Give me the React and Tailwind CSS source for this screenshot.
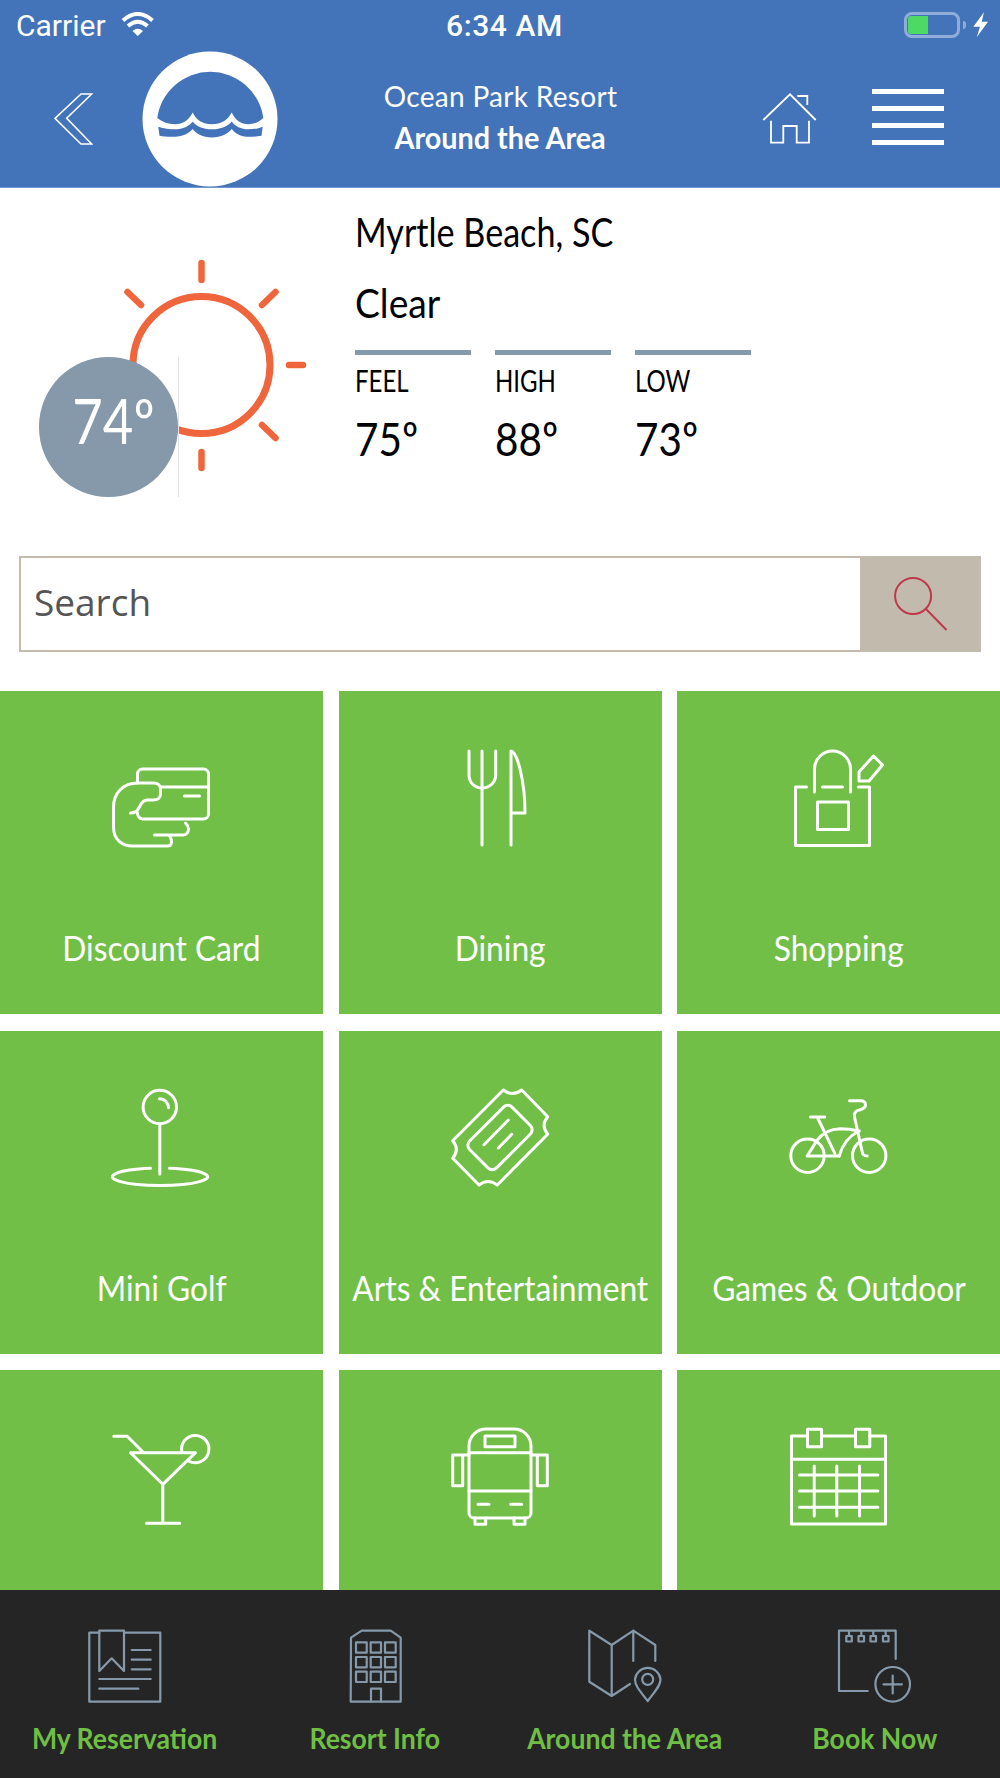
import React from "react";

const W = { fill: "none", stroke: "#fff", strokeWidth: 3, strokeLinecap: "round", strokeLinejoin: "round" };
const G = { fill: "none", stroke: "#8599aa", strokeWidth: 2.2, strokeLinecap: "round", strokeLinejoin: "round" };

const tiles = [
  {
    label: "Discount Card",
    x: 101.5,
    y: 741,
    icon: (
      <>
        <path d="M137 783v-9a5 5 0 0 1 5-5h61a5 5 0 0 1 5 5v40a5 5 0 0 1-5 5h-61a5.500 5.500 0 0 1-5-6" />
        <path d="M160 787h48M184 796h15" />
        <path d="M130 813c4 0 7-2 9-6 2-5 4-7 8-7h6c4 0 7-2 7-6v-5c0-4-3-6-7-6h-16c-14 0-24 10-24 24v20c0 13 9 19 19 19h35c3 0 4-2 4-4 0-4-2-7-4-7h-13h29c3 0 5-3 5-6s-2-5-3-6" />
      </>
    ),
  },
  {
    label: "Dining",
    x: 440,
    y: 741,
    icon: (
      <>
        <path d="M469 751v24c0 8 6 13 13 13s13.700-5 13.700-13v-24M482 751v94" />
        <path d="M511 845v-94c6 0 14 30 14 62h-14" />
      </>
    ),
  },
  {
    label: "Shopping",
    x: 778.5,
    y: 741,
    icon: (
      <>
        <path d="M806 787h-11v58.500h74V787h-11M822 787h20" />
        <path d="M814 792v-23a18 18 0 0 1 36 0v23" />
        <path d="M817 802h31v27.500h-31z" />
        <path d="M873 756l9 9-13.500 16h-10v-9z" />
      </>
    ),
  },
  {
    label: "Mini Golf",
    x: 101.5,
    y: 1081,
    icon: (
      <>
        <circle cx="159.300" cy="1107" r="16.700" />
        <path d="M159.300 1124v50M159 1098.700c5 0 8.500 4 9 9" />
        <path d="M150 1168.300A47.700 8.700 0 1 0 169 1168.300" />
      </>
    ),
  },
  {
    label: "Arts & Entertainment",
    x: 440,
    y: 1081,
    icon: (
      <>
        <path d="M503.300 1090Q512.500 1097 521.700 1090L547.700 1116.700Q540.500 1125.500 547.700 1134.300L497.300 1185Q488 1178 479 1185L452.700 1158.300Q460 1149.500 452.700 1140.700Z" />
        <rect x="470" y="1118.500" width="60" height="38" rx="6" transform="rotate(-45 500 1137.500)" />
        <path d="M508.300 1120L484 1144.700M511.700 1134.300L498.300 1148" />
      </>
    ),
  },
  {
    label: "Games & Outdoor",
    x: 778.5,
    y: 1081,
    icon: (
      <>
        <circle cx="807" cy="1155.700" r="16.700" />
        <circle cx="868.700" cy="1155.700" r="16.700" />
        <path d="M810 1117h14.300M816.700 1117l17.600 36.300" />
        <path d="M838.700 1156h-32l10-16c6-8 14-11 23-11.300 7 0 13 1 19 2.300" />
        <path d="M838.700 1156c3-11 10-20 19.600-25" />
        <path d="M866.700 1156c-3 0-5-2-5-4.300L854 1117c-1-4 2-7 5-7 3-1 6-3 6-5 0-3-2-4.300-5-4.300h-11" />
      </>
    ),
  },
  {
    x: 101.500,
    y: 1420,
    icon: (
      <>
        <path d="M130 1452.700h65l-32.700 31.600zM162.300 1484.300v39M146 1523.300h33.300" />
        <path d="M113.300 1436.300h13.400l16 16" />
        <path d="M181.500 1452.500A13.700 13.700 0 1 1 188 1461" />
      </>
    ),
  },
  {
    x: 440,
    y: 1420,
    icon: (
      <>
        <path d="M469 1446a17 17 0 0 1 17-17h28a17 17 0 0 1 17 17v67a5 5 0 0 1-5 5h-52a5 5 0 0 1-5-5z" />
        <path d="M469 1452.700h62M469 1491h62M485 1436h30v10.700h-30zM478 1504.300h11M510.700 1504.300h11" />
        <path d="M469 1455h-16.300v30.700h10V1455M531 1455h16.300v30.700h-10V1455" />
        <path d="M475 1518v6.300h10.700V1518M514 1518v6.300h11V1518" />
      </>
    ),
  },
  {
    x: 778.500,
    y: 1420,
    icon: (
      <>
        <path d="M807 1436h-16v88h94v-88h-16M821 1436h34M791 1459.300h94" />
        <path d="M807 1429.300h14v17.400h-14zM855 1429.300h14.300v17.400H855z" />
        <path d="M799 1475h78.300M799 1491h78.300M799 1507.300h78.300M813.700 1466v50M836.300 1466v50M859 1466v50" />
      </>
    ),
  },
];

const nav = [
  {
    label: "My Reservation",
    x: 75,
    icon: (
      <>
        <path d="M99.300 1632.700h-10v69h71v-69H124" />
        <path d="M99.300 1630.700H124V1671l-12.300-12.700L99.300 1671z" />
        <path d="M131.700 1650h19M131.700 1659.700h19M131.700 1669.300h19M99.300 1679h51.400M99.300 1688.700h39" />
      </>
    ),
  },
  {
    label: "Resort Info",
    x: 325,
    icon: (
      <>
        <path d="M351 1637.700l10.700-7h29l10 7v64h-50z" />
        <path d="M356 1642.300h10.700v10.400H356zM370.700 1642.300H381v10.400h-10.300zM385 1642.300h10.700v10.400H385zM356 1657h10.700v10.300H356zM370.700 1657H381v10.300h-10.300zM385 1657h10.700v10.300H385zM356 1671.700h10.700v10.300H356zM370.700 1671.700H381v10.300h-10.300zM385 1671.700h10.700v10.300H385z" />
        <path d="M371 1701.700v-13h10v13" />
      </>
    ),
  },
  {
    label: "Around the Area",
    x: 575,
    icon: (
      <>
        <path d="M633.300 1661v-30.300l22 14.300v16M633.300 1630.700L611.700 1645l-22.400-14.300v51l22.400 14.300 18.300-12M611.700 1645v51" />
        <path d="M647.700 1701C640 1691 635 1686 635 1679.500A12.800 12.800 0 0 1 660.500 1679.500C660.500 1686 655 1691 647.700 1701Z" />
        <circle cx="647.700" cy="1679.300" r="5.500" />
      </>
    ),
  },
  {
    label: "Book Now",
    x: 825,
    icon: (
      <>
        <path d="M895.700 1659v-28.300H839V1691h28.700" />
        <path d="M846.300 1636h5.500v5.500h-5.500zM858.500 1636h5.500v5.500h-5.500zM870.500 1636h5.500v5.500h-5.500zM883 1636h5.500v5.500H883zM849 1631v5M861.300 1631v5M873.300 1631v5M885.700 1631v5" />
        <circle cx="892.700" cy="1684.300" r="17.300" />
        <path d="M883.500 1684.300h18.400M892.700 1675.500v18" />
      </>
    ),
  },
];

function Stat({ label, value }) {
  return (
    <div className="flex flex-col w-[116px]">
      <div className="h-[5px] bg-[#8599aa]" />
      <div className="mt-[7px] h-[36px] leading-[36px] text-[30px] text-black whitespace-nowrap origin-left scale-x-[0.8]">{label}</div>
      <div className="mt-[12px] h-[56px] leading-[56px] text-[47px] text-black whitespace-nowrap origin-left scale-x-[0.86]">{value}</div>
    </div>
  );
}

function Tile({ t }) {
  return (
    <div className="flex flex-col items-center h-[323px] bg-[#71bf46]">
      <svg className="mt-[50px] shrink-0" width="120" height="120" viewBox={`${t.x} ${t.y} 120 120`} {...W}>
        {t.icon}
      </svg>
      {t.label && (
        <div className="mt-[66px] h-[40px] leading-[40px] text-[35px] text-white whitespace-nowrap scale-x-[0.906]">{t.label}</div>
      )}
    </div>
  );
}

export default function App() {
  return (
    <div className="w-[1000px] h-[1778px] flex flex-col overflow-hidden bg-white font-[Lato,sans-serif]">
      <header className="h-[188px] shrink-0 bg-[#4374b9] text-white border-b border-[#6f97d0]">
        <div className="h-[50px] grid grid-cols-3 items-center pl-[16px] pr-[12px] font-[Roboto,sans-serif] text-[30px]">
          <div className="flex items-center gap-[14px]">
            <span>Carrier</span>
            <svg width="36" height="26" viewBox="120 12 36 26" fill="none" stroke="#fff" strokeWidth="4">
              <path d="M123 20.500Q137.700 7.500 152.500 20.500M128 26Q137.700 17.500 147.500 26" />
              <path d="M132.500 31L137.700 36L143 31Q137.700 26.500 132.500 31Z" fill="#fff" stroke="none" />
            </svg>
          </div>
          <div className="text-center font-medium tracking-[0.6px] whitespace-nowrap pl-[5px]">6:34 AM</div>
          <div className="flex items-center justify-end">
            <div className="w-[56px] h-[26px] rounded-[8px] border-[3px] border-[#8fadd8] p-[1px]">
              <div className="w-[20px] h-full rounded-l-[3px] bg-[#4cd964]" />
            </div>
            <div className="ml-[3px] w-[3px] h-[8px] rounded-r-[3px] bg-[#8fadd8]" />
            <svg className="ml-[7px]" width="15" height="26" viewBox="973 12 15 26" fill="#fff">
              <path d="M984 12.300L973.300 26.700H980L976.700 37.300L988 21.700H981.700Z" />
            </svg>
          </div>
        </div>
        <div className="h-[137px] flex items-center pl-[54px]">
          <svg width="39" height="52" viewBox="54 93 39 52" fill="none" stroke="#fff" strokeWidth="1.600">
            <path d="M91.700 94H81L55 118.300L81 144H91.700L66.700 118.300Z" />
          </svg>
          <svg className="ml-[49px]" width="136" height="136" viewBox="142 50.300 136 136">
            <circle cx="210" cy="118.300" r="67.500" fill="#fff" />
            <path d="M157.300 117.300A53.500 53.500 0 0 1 263.300 117.300C258 122 254 123.500 248.300 123.500C241 123.500 235 119 231.700 111.700C228 119 221 123.500 211.700 123.500C203 123.500 196 119 192.700 111.700C189 119 183 123.500 175 123.500C168 123.500 163 121.500 157.300 117.300Z" fill="#4374b9" />
            <path d="M158.300 126C164 128 170 128.500 175 128.500C183 128.500 189 125.500 192.700 120.700C196 125.500 203 128.500 211.700 128.500C221 128.500 228 125.500 231.700 120.700C235 125.500 241 128.500 248.300 128.500C253 128.500 258 128 262.700 126L261.500 135C256 136 251 136.200 247 136C240 135.500 235 132.500 231.700 128.300C228 133 221 136.700 211.700 136.700C203 136.700 196 133 192.700 128.300C189 132.500 183 136 175 136C170 136.200 164 136 159.500 135Z" fill="#4374b9" />
          </svg>
          <div className="w-[445px] flex flex-col items-center pb-[3px]">
            <div className="h-[40px] leading-[40px] text-[28px] whitespace-nowrap tracking-[0.3px]">Ocean Park Resort</div>
            <div className="h-[42px] leading-[42px] text-[30px] font-bold whitespace-nowrap scale-x-[0.96]">Around the Area</div>
          </div>
          <svg className="ml-[39px]" width="56" height="52" viewBox="762 93 56 52" fill="none" stroke="#fff" strokeWidth="1.800">
            <path d="M763.300 120L790 94.300L815.700 120M797.300 96H807.300V105" />
            <path d="M771 120.700V142.700H783.300V126H796.700V142.700H809V120.700" />
          </svg>
          <div className="ml-[54px] w-[72px] flex flex-col gap-[12px] mb-[4px]">
            <div className="h-[5px] bg-white" />
            <div className="h-[5px] bg-white" />
            <div className="h-[5px] bg-white" />
            <div className="h-[5px] bg-white" />
          </div>
        </div>
      </header>

      <section className="h-[368px] shrink-0 flex">
        <div className="relative w-[355px] shrink-0">
          <svg width="320" height="300" viewBox="0 188 320 300" fill="none" stroke="#ef653c" strokeWidth="6.500" strokeLinecap="round">
            <circle cx="201.500" cy="365" r="68.500" strokeWidth="7" />
            <path d="M201.500 263V280M201.500 452V468M289 365H303M127.500 292L141 305M275.500 292L262 305M275.500 438L262 425" />
          </svg>
          <div className="absolute left-[39px] top-[169px] w-[140px] h-[140px] border-r border-[#e4e4e4]">
            <div className="w-[139px] h-[140px] rounded-full bg-[#8599aa] flex items-center justify-center pl-[10px] pb-[14px] text-white text-[62px] whitespace-nowrap">
              <span className="scale-x-[0.85]">74º</span>
            </div>
          </div>
        </div>
        <div className="flex flex-col pt-[19px]">
          <div className="h-[50px] leading-[50px] text-[40px] text-black whitespace-nowrap origin-left scale-x-[0.853]">Myrtle Beach, SC</div>
          <div className="mt-[21px] h-[50px] leading-[50px] text-[40px] text-black whitespace-nowrap origin-left scale-x-[0.93]">Clear</div>
          <div className="mt-[22px] flex gap-[24px]">
            <Stat label="FEEL" value="75º" />
            <Stat label="HIGH" value="88º" />
            <Stat label="LOW" value="73º" />
          </div>
        </div>
      </section>

      <div className="h-[96px] shrink-0 ml-[19px] mr-[19px] flex border-[2.500px] border-[#c3bbae]">
        <div className="flex-1 flex items-center pl-[13px] pb-[4px] font-['Open_Sans',sans-serif] text-[37px] text-[#555]">Search</div>
        <div className="w-[119px] bg-[#c1baad] flex items-center justify-center">
          <svg width="70" height="70" viewBox="884.500 569 70 70" fill="none" stroke="#c0394b" strokeWidth="2">
            <circle cx="912.600" cy="596" r="18" />
            <path d="M925 608.500L946 630" />
          </svg>
        </div>
      </div>

      <main className="mt-[39px] flex-1 min-h-0 overflow-hidden grid grid-cols-3 gap-x-[15.500px] gap-y-[16.500px] content-start">
        {tiles.map((t) => (
          <Tile key={`${t.x}-${t.y}`} t={t} />
        ))}
      </main>

      <footer className="h-[188px] shrink-0 bg-[#252525] grid grid-cols-4">
        {nav.map((n) => (
          <div key={n.label} className="flex flex-col items-center">
            <svg className="mt-[36px] shrink-0" width="100" height="80" viewBox={`${n.x} 1626 100 80`} {...G}>
              {n.icon}
            </svg>
            <div className="mt-[14px] h-[36px] leading-[36px] text-[28px] font-bold text-[#6fbf44] whitespace-nowrap scale-x-[0.95]">{n.label}</div>
          </div>
        ))}
      </footer>
    </div>
  );
}
